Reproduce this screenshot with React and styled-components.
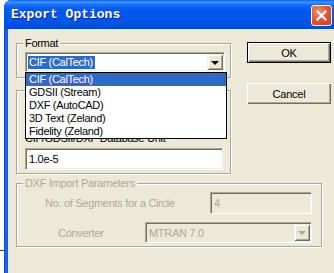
import styled, { createGlobalStyle } from 'styled-components';

const GlobalStyle = createGlobalStyle`
  html, body {
    margin: 0;
    padding: 0;
    overflow: hidden;
    background: #FFFFFF;
  }
  body {
    font-family: "Liberation Sans", Arial, sans-serif;
    font-size: 11px;
  }
`;

const formats = ['CIF (CalTech)', 'GDSII (Stream)', 'DXF (AutoCAD)', '3D Text (Zeland)', 'Fidelity (Zeland)'];

export default function App() {
  return (
    <>
      <GlobalStyle />
      <Stray />
      <Frame>
        <TitleBar>
          <Title>Export Options</Title>
          <CloseButton>
            <svg width="11" height="11" viewBox="0 0 11 11">
              <path d="M1.5 1.5 L9.5 9.5 M9.5 1.5 L1.5 9.5" stroke="#FFFFFF" strokeWidth="2.2" strokeLinecap="square" />
            </svg>
          </CloseButton>
        </TitleBar>

        <Body>
          <TopRow>
            <LeftCol>
              {/* Format */}
              <GroupBox $width={215} $height={35} $pad="8px 0 0 8px" $top={14}>
                <GroupLabel>Format</GroupLabel>
                <ComboWrap>
                  <Combo $width={200} $height={20}>
                    <ComboValue>
                      <Selected>CIF (CalTech)</Selected>
                    </ComboValue>
                    <DropButton>
                      <Arrow />
                    </DropButton>
                  </Combo>
                  <DropList>
                    {formats.map((f, i) => (
                      <DropItem key={f} $active={i === 0}>{f}</DropItem>
                    ))}
                  </DropList>
                </ComboWrap>
              </GroupBox>

              {/* database unit */}
              <GroupBox $width={215} $height={84} $pad="40px 0 0 8px" $top={12}>
                <FieldLabel>CIF/GDSII/DXF Database Unit</FieldLabel>
                <TextField $width={198} $height={22}>1.0e-5</TextField>
              </GroupBox>
            </LeftCol>

            <RightCol>
              <Button $default>OK</Button>
              <Button>Cancel</Button>
            </RightCol>
          </TopRow>

          {/* DXF, disabled */}
          <GroupBox $width={306} $height={64} $pad="8px 0 0 0" $top={9}>
            <GroupLabel $disabled>DXF Import Parameters</GroupLabel>
            <ParamRow>
              <ParamLabel $indent={28} $width={165}>No. of Segments for a Circle</ParamLabel>
              <TextField $width={102} $height={22} $disabled>4</TextField>
            </ParamRow>
            <ParamRow>
              <ParamLabel $indent={41} $width={87}>Converter</ParamLabel>
              <Combo $width={167} $height={21} $disabled>
                <ComboValue $disabled>MTRAN 7.0</ComboValue>
                <DropButton>
                  <Arrow $disabled />
                </DropButton>
              </Combo>
            </ParamRow>
          </GroupBox>
        </Body>
      </Frame>
    </>
  );
}

const Stray = styled.div`
  position: absolute;
  left: 0;
  top: 250px;
  width: 4px;
  height: 1px;
  background: #8E1E1E;
`;

const Frame = styled.div`
  margin-left: 4px;
  width: 330px;
  height: 273px;
  display: flex;
  flex-direction: column;
  background: linear-gradient(to right, #0842C8 0px, #1F6CF0 2px, #0A56E6 4px);
  border-top-left-radius: 7px;
  overflow: hidden;
`;

const TitleBar = styled.div`
  box-sizing: border-box;
  height: 29px;
  flex: none;
  display: flex;
  align-items: flex-start;
  justify-content: space-between;
  padding: 0 2px 0 7px;
  background: linear-gradient(to bottom, #0A5FE6 0px, #3E94FF 2px, #1A6CF5 5px, #0058EE 10px, #0055E8 20px, #0050DF 26px, #0046C8 29px);
`;

const Title = styled.div`
  margin-top: 8px;
  font-family: "Liberation Mono", "DejaVu Sans Mono", monospace;
  font-weight: bold;
  font-size: 13px;
  line-height: 14px;
  color: #FFFFFF;
  text-shadow: 1px 1px 0 #0B2A8E;
`;

const CloseButton = styled.div`
  box-sizing: border-box;
  margin-top: 5px;
  width: 21px;
  height: 21px;
  display: flex;
  align-items: center;
  justify-content: center;
  border: 1px solid #FFFFFF;
  border-radius: 3px;
  background: radial-gradient(circle at 35% 30%, #F2926E 0%, #E4593A 45%, #C8391B 100%);
`;

const Body = styled.div`
  flex: 1;
  margin-left: 4px;
  padding-left: 8px;
  background: #ECE9D8;
  display: flex;
  flex-direction: column;
  color: #000000;
`;

const TopRow = styled.div`
  display: flex;
  align-items: flex-start;
`;

const LeftCol = styled.div`
  display: flex;
  flex-direction: column;
`;

const RightCol = styled.div`
  display: flex;
  flex-direction: column;
  gap: 20px;
  margin: 13px 0 0 16px;
`;

const GroupBox = styled.div`
  position: relative;
  box-sizing: border-box;
  width: ${p => p.$width}px;
  height: ${p => p.$height}px;
  margin-top: ${p => p.$top}px;
  padding: ${p => p.$pad};
  border: 1px solid #ACA899;
  box-shadow: 1px 1px 0 #FFFFFF, inset 1px 1px 0 #FFFFFF;
  display: flex;
  flex-direction: column;
`;

const GroupLabel = styled.div`
  position: absolute;
  top: -8px;
  left: 6px;
  padding: 0 2px;
  background: #ECE9D8;
  line-height: 14px;
  letter-spacing: -0.3px;
  color: ${p => (p.$disabled ? '#ACA899' : '#000000')};
`;

const FieldLabel = styled.div`
  line-height: 14px;
  margin-bottom: 3px;
  letter-spacing: -0.3px;
  white-space: nowrap;
`;

const sunken = `
  box-sizing: border-box;
  border: 1px solid;
  border-color: #ACA899 #FFFFFF #FFFFFF #ACA899;
  box-shadow: inset 1px 1px 0 #716F64, inset -1px -1px 0 #F1EFE2;
`;

const TextField = styled.div`
  ${sunken}
  width: ${p => p.$width}px;
  height: ${p => p.$height}px;
  padding: 0 0 0 3px;
  display: flex;
  align-items: center;
  background: ${p => (p.$disabled ? '#ECE9D8' : '#FFFFFF')};
  color: ${p => (p.$disabled ? '#ACA899' : '#000000')};
  letter-spacing: -0.3px;
`;

const ComboWrap = styled.div`
  position: relative;
`;

const Combo = styled.div`
  ${sunken}
  width: ${p => p.$width}px;
  height: ${p => p.$height}px;
  padding: 1px;
  display: flex;
  background: ${p => (p.$disabled ? '#ECE9D8' : '#FFFFFF')};
`;

const ComboValue = styled.div`
  flex: 1;
  display: flex;
  align-items: center;
  padding-left: ${p => (p.$disabled ? 2 : 1)}px;
  letter-spacing: -0.3px;
  color: ${p => (p.$disabled ? '#ACA899' : '#000000')};
`;

const Selected = styled.span`
  display: inline-block;
  height: 13px;
  line-height: 13px;
  padding: 0 2px 0 1px;
  background: #316AC5;
  color: #FFFFFF;
`;

const raised = `
  box-sizing: border-box;
  background: #ECE9D8;
  box-shadow: inset 1px 1px 0 #F1EFE2, inset -1px -1px 0 #716F64, inset 2px 2px 0 #FFFFFF, inset -2px -2px 0 #ACA899;
`;

const DropButton = styled.div`
  ${raised}
  width: 16px;
  flex: none;
  display: flex;
  align-items: center;
  justify-content: center;
`;

const Arrow = styled.div`
  width: 0;
  height: 0;
  margin-top: 1px;
  border-left: 4px solid transparent;
  border-right: 4px solid transparent;
  border-top: 4px solid ${p => (p.$disabled ? '#ACA899' : '#000000')};
`;

const DropList = styled.div`
  position: absolute;
  top: 100%;
  left: 0;
  width: 202px;
  box-sizing: border-box;
  border: 1px solid #000000;
  background: #FFFFFF;
  z-index: 2;
`;

const DropItem = styled.div`
  height: 13px;
  line-height: 13px;
  padding-left: 3px;
  letter-spacing: -0.3px;
  background: ${p => (p.$active ? '#316AC5' : '#FFFFFF')};
  color: ${p => (p.$active ? '#FFFFFF' : '#000000')};
`;

const Button = styled.div`
  box-sizing: border-box;
  width: 84px;
  height: 21px;
  display: flex;
  align-items: center;
  justify-content: center;
  background: #ECE9D8;
  letter-spacing: -0.2px;
  border: ${p => (p.$default ? '1px solid #000000' : 'none')};
  box-shadow: inset 1px 1px 0 #FFFFFF, inset -1px -1px 0 #716F64, inset -2px -2px 0 #ACA899;
`;

const ParamRow = styled.div`
  display: flex;
  align-items: center;
  & + & {
    margin-top: 8px;
  }
`;

const ParamLabel = styled.div`
  box-sizing: border-box;
  margin-left: ${p => p.$indent}px;
  width: ${p => p.$width}px;
  white-space: nowrap;
  letter-spacing: -0.3px;
  color: #ACA899;
`;
